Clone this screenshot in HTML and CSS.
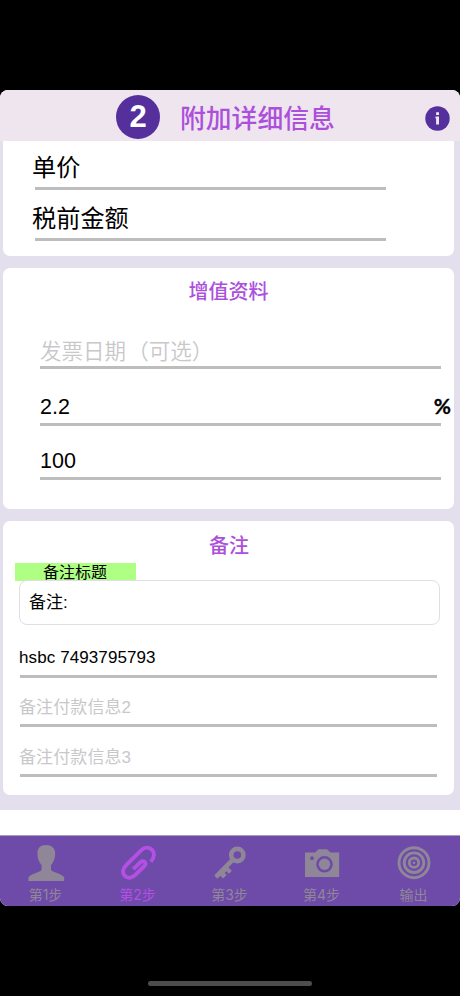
FILE: index.html
```html
<!DOCTYPE html>
<html lang="zh-CN">
<head>
<meta charset="utf-8">
<title>附加详细信息</title>
<link rel="stylesheet" href="styles.css">
</head>
<body>
<div class="screen">
  <header class="header">
    <span class="step-badge">2</span>
    <h1 class="header-title">附加详细信息</h1>
    <svg class="info" viewBox="0 0 25 25"><circle cx="12.5" cy="12.5" r="12.2" fill="#552f9c"/><path d="M11.100 6.300h2.900v2.600h-2.900zM10.500 10.500h3.500v7.900h-2.900v-6h-.6z" fill="#efe6ee"/></svg>
  </header>
  <main class="content">
    <section class="panel panel-price">
      <div class="field unit-price">单价</div>
      <div class="field pretax">税前金额</div>
    </section>
    <section class="panel panel-extra">
      <h2 class="panel-title">增值资料</h2>
      <div class="field date placeholder">发票日期<span class="paren paren-open">（</span>可选<span class="paren">）</span></div>
      <div class="field rate"><span>2.2</span><span class="percent">%</span></div>
      <div class="field amount">100</div>
    </section>
    <section class="panel panel-notes">
      <h2 class="panel-title">备注</h2>
      <div class="note-label">备注标题</div>
      <div class="note-box">备注:</div>
      <div class="field pay pay-first">hsbc 7493795793</div>
      <div class="field pay pay-second placeholder">备注付款信息2</div>
      <div class="field pay pay-third placeholder">备注付款信息3</div>
    </section>
  </main>
  <nav class="tabs">
    <div class="tab">
      <svg viewBox="0 0 40 40"><path d="M20 3c-5.700 0-8.600 3.300-8.600 8.500 0 4.500 1.600 9 4.200 11.700V28c-2.500 2.600-10.500 3.300-13.200 7.500V39h35.800v-3.500c-2.700-4.200-10.700-4.900-13.200-7.500v-4.800c2.600-2.700 4.200-7.200 4.200-11.700C29.200 6.300 25.700 3 20 3z" fill="currentColor"/></svg>
      <span>第1步</span>
    </div>
    <div class="tab active">
      <svg viewBox="0 0 40 40"><path d="M32.800 19.800C36.500 15.500 36.800 10.800 34.200 8c-3.300-3.300-8-2.700-11.400.6L8.200 23.100c-3.600 3.700-4.100 8-1.300 10.800 2.900 2.900 7.200 2.300 10.700-1.200l8.200-8.200c1.800-1.800 2-3.500.9-4.600s-3-1-4.700.7l-6.700 6.600" fill="none" stroke="currentColor" stroke-width="4"/></svg>
      <span>第2步</span>
    </div>
    <div class="tab">
      <svg viewBox="0 0 40 40"><g fill="none" stroke="currentColor"><circle cx="27.300" cy="13" r="6.100" stroke-width="4.600"/><path d="M22.800 17.700 6 34.800" stroke-width="4.600"/></g><path d="m17.500 24.500 4.300 4.200-2.800 3-2.600-2.500-1.700 1.700 2 2-3.600 3.700-3.100-3.200-3 3-2-2z" fill="currentColor"/></svg>
      <span>第3步</span>
    </div>
    <div class="tab">
      <svg viewBox="0 0 40 40"><path fill-rule="evenodd" d="M3 10.500h10l3.500-3.300h8.500l3.500 3.300H37.200V35H3zM10 14.300a1.900 1.900 0 1 0 0 3.800 1.900 1.900 0 0 0 0-3.800zM22.500 14a8.300 8.300 0 1 0 0 16.600 8.300 8.300 0 0 0 0-16.600z" fill="currentColor"/><circle cx="22.500" cy="22.300" r="5.700" fill="currentColor"/></svg>
      <span>第4步</span>
    </div>
    <div class="tab">
      <svg viewBox="0 0 40 40"><g fill="none" stroke="currentColor" stroke-width="2.900"><circle cx="20" cy="20.700" r="15"/><circle cx="20" cy="20.700" r="9.800"/><circle cx="20" cy="20.700" r="4.700"/></g><circle cx="20" cy="20.700" r="1.300" fill="currentColor"/></svg>
      <span>输出</span>
    </div>
  </nav>
</div>
<div class="home-indicator"></div>
</body>
</html>
```
FILE: styles.css
```css
* { box-sizing: border-box; }
body {
  margin: 0;
  height: 996px;
  padding-top: 90px;
  background: #000;
  color: #000;
  font-family: "Liberation Sans", "Noto Sans CJK SC", sans-serif;
  overflow: hidden;
}
h1, h2 { margin: 0; font-weight: 500; color: #ac50dc; }
.screen {
  display: flex;
  flex-direction: column;
  height: 816px;
  background: #fff;
  border-radius: 8px;
  overflow: hidden;
}
.header {
  display: flex;
  height: 51px;
  padding: 5px 10px 0 116px;
  background: #eee5ee;
}
.step-badge {
  width: 44px;
  height: 44px;
  border-radius: 50%;
  background: #552f9c;
  color: #fff;
  font-size: 31px;
  font-weight: 700;
  line-height: 43px;
  text-align: center;
}
.header-title {
  margin-left: 20px;
  font-family: "Noto Sans CJK SC", sans-serif;
  font-size: 25.800px;
  line-height: 43px;
  white-space: nowrap;
}
.info { width: 25px; height: 25px; margin: 11px 0 0 auto; }
.content {
  display: flex;
  flex-direction: column;
  gap: 12px;
  height: 669px;
  padding: 0 6px 15px 3px;
  background: #e4dfec;
}
.panel { background: #fff; border-radius: 7px; }
.panel-price { height: 115px; padding: 0 68px 0 32px; border-radius: 0 0 7px 7px; }
.panel-extra { height: 241px; padding: 0 13px 0 37px; }
.panel-notes { height: 274px; padding: 0 17px 0 16px; }
.panel-title {
  font-family: "Noto Sans CJK SC", sans-serif;
  font-size: 20px;
  text-align: center;
}
.panel-extra .panel-title { height: 63px; line-height: 45px; margin-left: -24px; }
.panel-notes .panel-title { height: 42px; line-height: 47px; padding-left: 2px; }
.field {
  border-bottom: 3px solid #bdbdbd;
  white-space: nowrap;
}
.placeholder { color: #c8c8cb; }
.unit-price, .pretax { font-size: 24.200px; text-indent: -3px; }
.unit-price { height: 49px; line-height: 53px; }
.pretax { height: 51px; line-height: 57px; }
.date { height: 38px; font-size: 21.500px; line-height: 37px; font-family: "Noto Sans CJK SC", sans-serif; font-weight: 350; }
.paren { font-feature-settings: "halt"; }
.paren-open { margin-left: 12px; }
.rate, .amount { font-size: 21.500px; }
.rate { display: flex; justify-content: space-between; height: 57px; line-height: 76px; }
.percent {
  margin-right: -10px;
  font-family: Lato, sans-serif;
  font-size: 21px;
  font-weight: 700;
  line-height: 74px;
  -webkit-text-stroke: 0.300px #000;
}
.amount { height: 54px; line-height: 71px; }
.note-label {
  width: 121px;
  height: 18px;
  margin-left: -4px;
  padding-right: 1px;
  background: #afff85;
  font-size: 16px;
  line-height: 19px;
  text-align: center;
}
.note-box {
  width: 421px;
  height: 45px;
  margin-top: -1px;
  padding-left: 9px;
  border: 1px solid #dfdfdf;
  border-radius: 8px;
  background: #fff;
  font-size: 17px;
  line-height: 43px;
}
.pay { margin-left: 1px; font-size: 17px; text-indent: -1px; }
.pay-first { height: 53px; line-height: 66px; letter-spacing: 0.100px; }
.pay-second { height: 49px; line-height: 59px; letter-spacing: 0.100px; }
.pay-third { height: 50px; line-height: 61px; letter-spacing: 0.100px; }
.tabs {
  display: grid;
  grid-template-columns: repeat(5, 92px);
  height: 71px;
  margin-top: auto;
  padding-top: 7px;
  border-top: 1px solid #a99bc0;
  background: #6e4aa9;
}
.tab {
  display: flex;
  flex-direction: column;
  align-items: center;
  padding-right: 1px;
  color: #8f8797;
  font-family: Inter, "Noto Sans CJK SC", sans-serif;
  font-size: 14px;
  line-height: 16px;
}
.tab svg { width: 40px; height: 40px; margin-bottom: 5px; margin-top: -1px; }
.active { color: #b44fe3; }
.home-indicator {
  width: 164px;
  height: 5px;
  margin: 75px auto 0;
  border-radius: 3px;
  background: #4d4d4d;
}
```
